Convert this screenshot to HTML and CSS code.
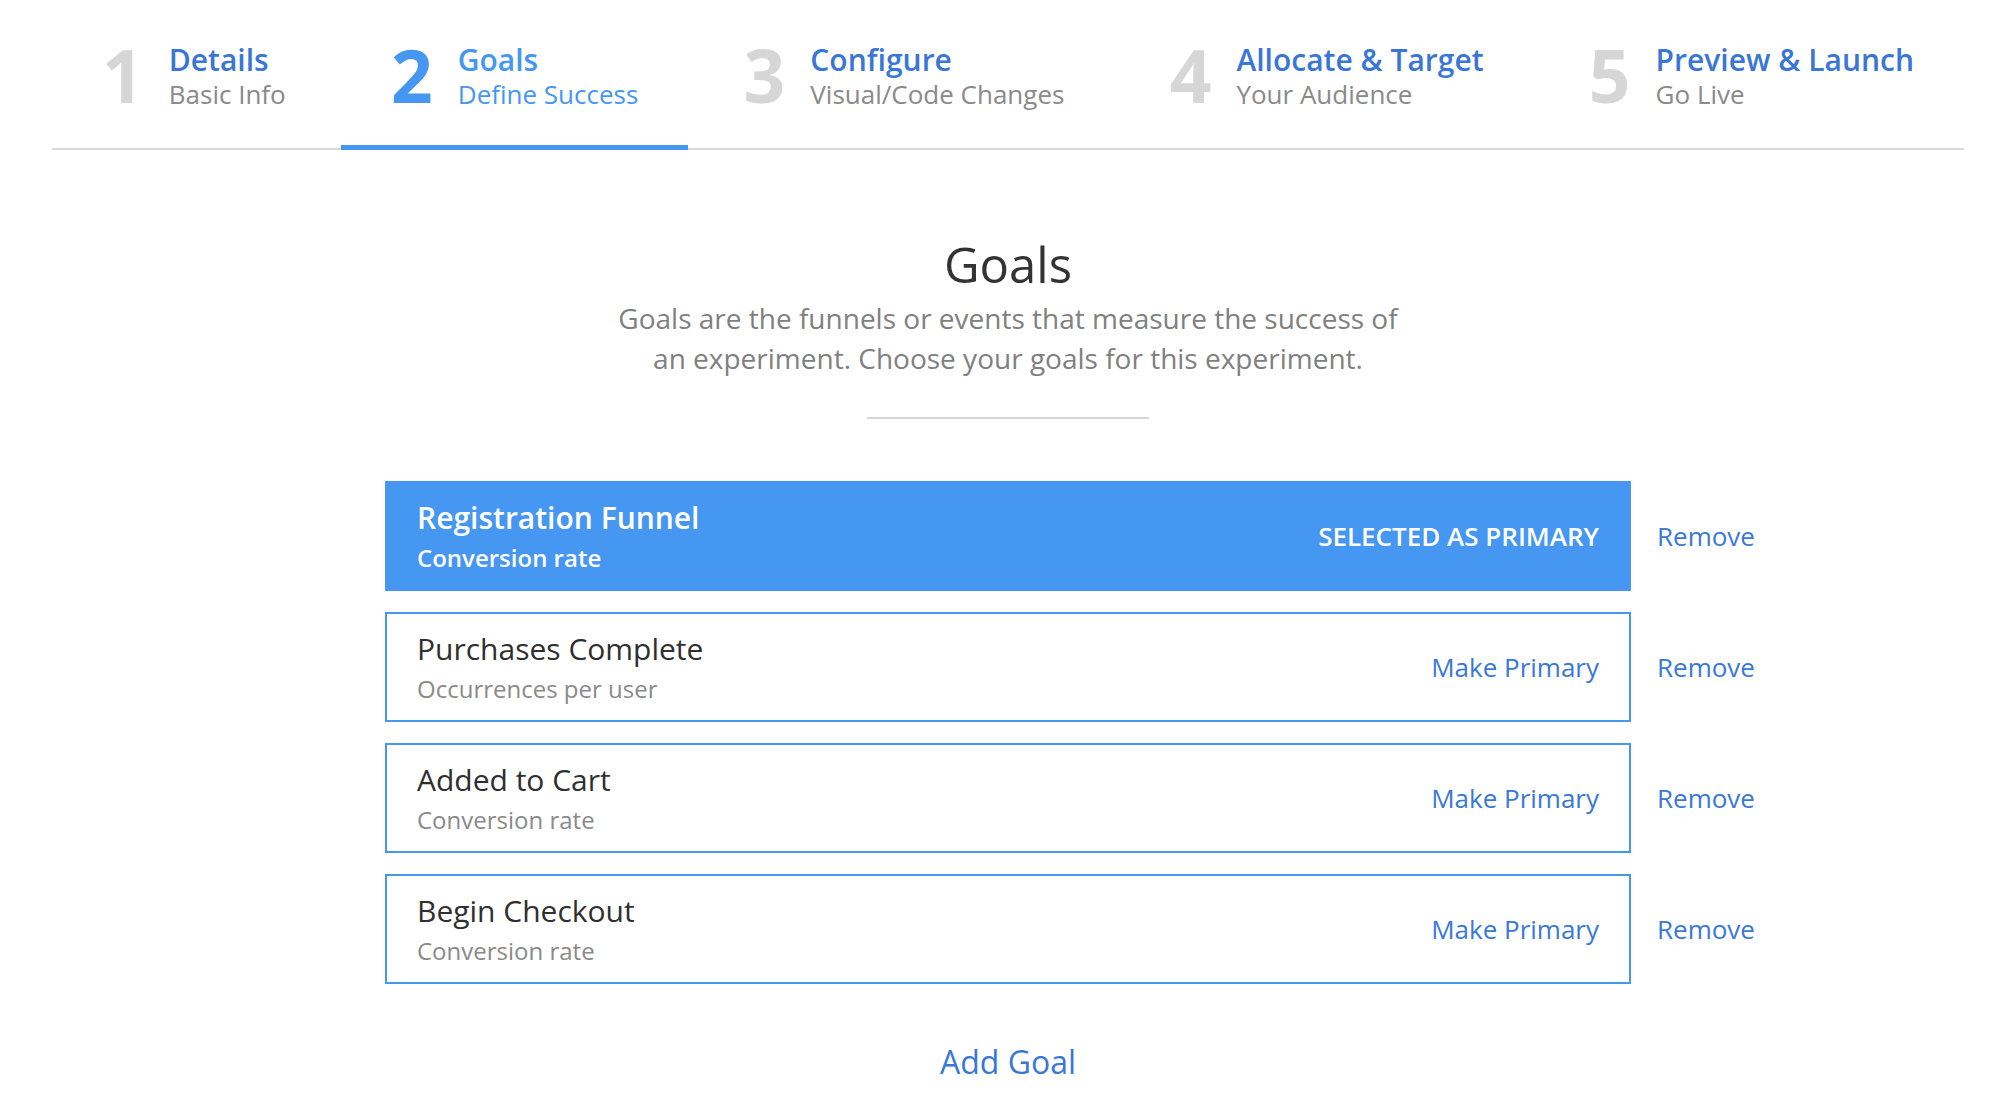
FILE: index.html
```html
<!DOCTYPE html>
<html lang="en">
<head>
<meta charset="utf-8">
<title>Goals</title>
<link rel="stylesheet" href="styles.css">
</head>
<body>
<nav class="stepper">
  <div class="step">
    <span class="step-num">1</span>
    <div class="step-text">
      <div class="step-title">Details</div>
      <div class="step-sub">Basic Info</div>
    </div>
  </div>
  <div class="step step-active">
    <span class="step-num">2</span>
    <div class="step-text">
      <div class="step-title">Goals</div>
      <div class="step-sub">Define Success</div>
    </div>
  </div>
  <div class="step">
    <span class="step-num">3</span>
    <div class="step-text">
      <div class="step-title">Configure</div>
      <div class="step-sub">Visual/Code Changes</div>
    </div>
  </div>
  <div class="step">
    <span class="step-num">4</span>
    <div class="step-text">
      <div class="step-title">Allocate &amp; Target</div>
      <div class="step-sub">Your Audience</div>
    </div>
  </div>
  <div class="step">
    <span class="step-num">5</span>
    <div class="step-text">
      <div class="step-title">Preview &amp; Launch</div>
      <div class="step-sub">Go Live</div>
    </div>
  </div>
</nav>

<main class="content">
  <h1 class="heading">Goals</h1>
  <p class="intro">Goals are the funnels or events that measure the success of an experiment. Choose your goals for this experiment.</p>
  <hr class="divider">

  <div class="goals">
    <div class="goal-row">
      <div class="goal goal-primary">
        <div class="goal-info">
          <div class="goal-title">Registration Funnel</div>
          <div class="goal-sub">Conversion rate</div>
        </div>
        <span class="goal-status">SELECTED AS PRIMARY</span>
      </div>
      <a class="remove" href="#">Remove</a>
    </div>
    <div class="goal-row">
      <div class="goal">
        <div class="goal-info">
          <div class="goal-title">Purchases Complete</div>
          <div class="goal-sub">Occurrences per user</div>
        </div>
        <a class="goal-action" href="#">Make Primary</a>
      </div>
      <a class="remove" href="#">Remove</a>
    </div>
    <div class="goal-row">
      <div class="goal">
        <div class="goal-info">
          <div class="goal-title">Added to Cart</div>
          <div class="goal-sub">Conversion rate</div>
        </div>
        <a class="goal-action" href="#">Make Primary</a>
      </div>
      <a class="remove" href="#">Remove</a>
    </div>
    <div class="goal-row">
      <div class="goal">
        <div class="goal-info">
          <div class="goal-title">Begin Checkout</div>
          <div class="goal-sub">Conversion rate</div>
        </div>
        <a class="goal-action" href="#">Make Primary</a>
      </div>
      <a class="remove" href="#">Remove</a>
    </div>
  </div>

  <a class="add-goal" href="#">Add Goal</a>
</main>
</body>
</html>
```

FILE: styles.css
```css
html, body {
  margin: 0;
  padding: 0;
  background: #ffffff;
}

body {
  font-family: "Open Sans", "Liberation Sans", sans-serif;
  color: #333333;
}

a {
  text-decoration: none;
}

/* Stepper */
.stepper {
  display: flex;
  justify-content: space-between;
  margin: 0 52px;
  border-bottom: 2px solid #d9d9d9;
}

.step {
  display: flex;
  align-items: flex-start;
  padding: 42px 50px 34px;
  border-bottom: 5px solid transparent;
  margin-bottom: -2px;
}

.step-active {
  border-bottom-color: #4597f2;
}

.step-num {
  font-size: 73px;
  line-height: 66px;
  font-weight: 700;
  color: #d6d6d6;
  margin-right: 25px;
}

.step-title {
  font-size: 30px;
  line-height: 36px;
  font-weight: 600;
  color: #3a76d6;
}

.step-sub {
  font-size: 26px;
  line-height: 33px;
  color: #8a8a8a;
}

.step-active .step-num,
.step-active .step-title,
.step-active .step-sub {
  color: #4597f2;
}

/* Content */
.content {
  display: flex;
  flex-direction: column;
  align-items: center;
}

.heading {
  margin: 84px 0 0;
  font-size: 49px;
  line-height: 60px;
  font-weight: 400;
  color: #333333;
}

.intro {
  margin: 4px 0 0;
  width: 810px;
  text-align: center;
  font-size: 28px;
  line-height: 40px;
  color: #808080;
}

.divider {
  margin: 39px 0 0;
  width: 282px;
  height: 2px;
  border: 0;
  background: #d6d6d6;
}

.goals {
  margin-top: 62px;
  width: 100%;
  display: flex;
  flex-direction: column;
  gap: 21px;
}

.goal-row {
  display: grid;
  grid-template-columns: 1fr 1246px 1fr;
  align-items: center;
}

.goal {
  grid-column: 2;
  box-sizing: border-box;
  height: 110px;
  border: 2px solid #4597f2;
  padding: 0 30px;
  display: flex;
  align-items: center;
  justify-content: space-between;
}

.goal-info {
  display: flex;
  flex-direction: column;
}

.goal-title {
  font-size: 30px;
  line-height: 40px;
  color: #2f2f2f;
}

.goal-sub {
  margin-top: 3px;
  font-size: 24px;
  line-height: 34px;
  color: #8a8a8a;
}

.goal-primary {
  background: #4597f2;
}

.goal-primary .goal-title {
  color: #ffffff;
  font-weight: 600;
}

.goal-primary .goal-sub {
  color: #ffffff;
  font-weight: 600;
}

.goal-status {
  font-size: 26px;
  font-weight: 600;
  color: #ffffff;
}

.goal-action {
  font-size: 26px;
  color: #3a78d8;
}

.remove {
  grid-column: 3;
  justify-self: start;
  padding-left: 26px;
  font-size: 26px;
  color: #3a78d8;
}

.add-goal {
  margin: 56px 0 0;
  font-size: 32px;
  line-height: 44px;
  color: #3a78d8;
}
```
